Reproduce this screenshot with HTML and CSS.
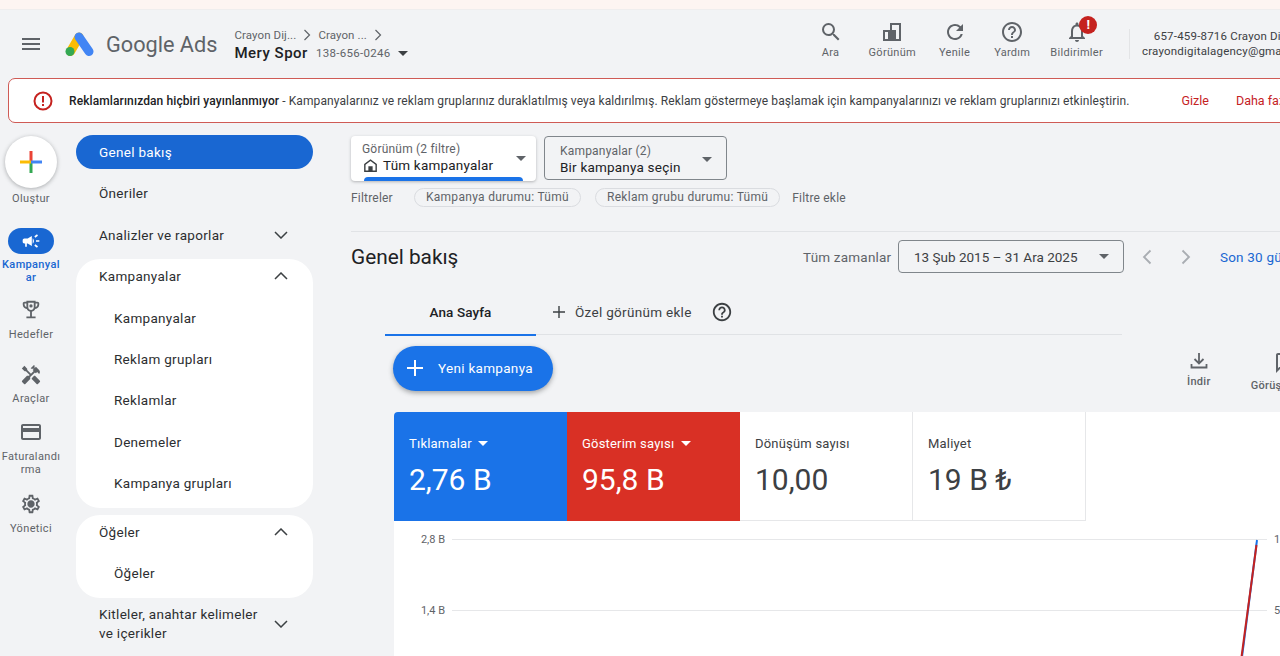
FILE: index.html
```html
<!DOCTYPE html>
<html lang="tr">

<head>
    <meta charset="UTF-8">
    <title>Google Ads - Genel bakış</title>
    <link rel="stylesheet" href="styles.css">
</head>

<body>
    <div class="top-strip"></div>

    <header class="header">
        <svg class="menu-icon" width="18" height="12" viewBox="0 0 18 12"><path fill="#5f6368" d="M0 0h18v2H0zM0 5h18v2H0zM0 10h18v2H0z"/></svg>
        <svg class="logo" width="30" height="26" viewBox="0 0 30 26">
            <path d="M14 6 5.500 20.500" stroke="#fbbc04" stroke-width="9" stroke-linecap="round" fill="none"/>
            <path d="M14 6 24 20.500" stroke="#4285f4" stroke-width="9" stroke-linecap="round" fill="none"/>
            <circle cx="5" cy="20.500" r="4.500" fill="#34a853"/>
        </svg>
        <span class="brand">Google Ads</span>
        <div class="crumbs">
            <div class="crumb-top">
                <span>Crayon Dij...</span>
                <svg width="8" height="12" viewBox="0 0 8 12"><path d="M1.500 1 6.500 6l-5 5" fill="none" stroke="#5f6368" stroke-width="1.200"/></svg>
                <span>Crayon ...</span>
                <svg width="8" height="12" viewBox="0 0 8 12"><path d="M1.500 1 6.500 6l-5 5" fill="none" stroke="#5f6368" stroke-width="1.200"/></svg>
            </div>
            <div class="crumb-main">
                <span class="account-name">Mery Spor</span>
                <span class="account-id">138-656-0246</span>
                <i class="caret caret-dark"></i>
            </div>
        </div>

        <nav class="actions">
            <a class="action action-search">
                <svg width="24" height="24" viewBox="0 0 24 24"><path fill="#5f6368" d="M15.500 14h-.79l-.28-.27A6.470 6.470 0 0 0 16 9.500 6.500 6.500 0 1 0 9.500 16c1.610 0 3.090-.59 4.230-1.570l.27.28v.79l5 4.990L20.490 19l-4.990-5zm-6 0C7.010 14 5 11.990 5 9.500S7.010 5 9.500 5 14 7.010 14 9.500 11.990 14 9.500 14z"/></svg>
                Ara
            </a>
            <a class="action action-view">
                <svg width="24" height="24" viewBox="0 0 24 24"><path fill="#5f6368" d="M3 10h7v11H3zM5 12v7h3v-7zM10 3h11v18H10v-2h9V5h-7v5h-2z"/><path fill="#5f6368" d="M10 10h6v9h-6z"/></svg>
                Görünüm
            </a>
            <a class="action action-reload">
                <svg width="24" height="24" viewBox="0 0 24 24"><path fill="#5f6368" d="M17.650 6.350A7.958 7.958 0 0 0 12 4c-4.420 0-7.990 3.580-7.990 8s3.570 8 7.990 8c3.730 0 6.840-2.550 7.730-6h-2.080A5.990 5.990 0 0 1 12 18c-3.310 0-6-2.690-6-6s2.690-6 6-6c1.660 0 3.140.69 4.220 1.780L13 11h7V4l-2.350 2.350z"/></svg>
                Yenile
            </a>
            <a class="action action-help">
                <svg width="24" height="24" viewBox="0 0 24 24"><path fill="#5f6368" d="M11 18h2v-2h-2v2zm1-16C6.480 2 2 6.480 2 12s4.480 10 10 10 10-4.480 10-10S17.520 2 12 2zm0 18c-4.410 0-8-3.590-8-8s3.590-8 8-8 8 3.590 8 8-3.590 8-8 8zm0-14c-2.210 0-4 1.790-4 4h2c0-1.100.9-2 2-2s2 .9 2 2c0 2-3 1.750-3 5h2c0-2.250 3-2.500 3-5 0-2.210-1.790-4-4-4z"/></svg>
                Yardım
            </a>
            <a class="action action-bell">
                <svg width="24" height="24" viewBox="0 0 24 24"><path fill="#5f6368" d="M12 22c1.100 0 2-.9 2-2h-4c0 1.100.9 2 2 2zm6-6v-5c0-3.070-1.630-5.640-4.500-6.320V4c0-.83-.67-1.500-1.500-1.500s-1.500.67-1.500 1.500v.68C7.640 5.360 6 7.920 6 11v5l-2 2v1h16v-1l-2-2zm-2 1H8v-6c0-2.480 1.510-4.500 4-4.500s4 2.020 4 4.500v6z"/></svg>
                Bildirimler
                <span class="badge">!</span>
            </a>
        </nav>

        <div class="account">
            <div>657-459-8716 Crayon Dijital</div>
            <div>crayondigitalagency@gmail.com</div>
        </div>
    </header>

    <div class="alert">
        <svg class="alert-icon" width="20" height="20" viewBox="0 0 20 20">
            <circle cx="10" cy="10" r="8.500" fill="none" stroke="#c5221f" stroke-width="2"/>
            <path d="M9 5h2v6.500H9zM9 13h2v2H9z" fill="#c5221f"/>
        </svg>
        <p class="alert-text"><b>Reklamlarınızdan hiçbiri yayınlanmıyor</b> - Kampanyalarınız ve reklam gruplarınız duraklatılmış veya kaldırılmış. Reklam göstermeye başlamak için kampanyalarınızı ve reklam gruplarınızı etkinleştirin.</p>
        <a class="alert-link alert-hide">Gizle</a>
        <a class="alert-link">Daha fazla bilgi</a>
    </div>

    <div class="layout">
        <aside class="rail">
            <div class="create">
                <svg width="24" height="24" viewBox="0 0 24 24">
                    <path d="M10.500 1h3v11h-3z" fill="#ea4335"/>
                    <path d="M10.500 12h3v11h-3z" fill="#34a853"/>
                    <path d="M1 10.500h11v3H1z" fill="#fbbc04"/>
                    <path d="M12 10.500h11v3H12z" fill="#4285f4"/>
                </svg>
            </div>
            <span class="rail-label create-label">Oluştur</span>

            <div class="rail-pill">
                <svg width="20" height="20" viewBox="0 0 24 24"><path fill="#fff" d="M18 11v2h4v-2h-4zm-2 6.610c.96.71 2.210 1.650 3.200 2.390.4-.53.8-1.070 1.200-1.600-.99-.74-2.240-1.680-3.200-2.400-.4.54-.8 1.080-1.200 1.610zM20.400 5.600c-.4-.53-.8-1.070-1.200-1.600-.99.74-2.240 1.680-3.200 2.400.4.53.8 1.070 1.200 1.600.96-.72 2.210-1.650 3.200-2.400zM4 9c-1.100 0-2 .9-2 2v2c0 1.100.9 2 2 2h1v4h2v-4h1l5 3V6L8 9H4zm11.500 3c0-1.330-.58-2.530-1.500-3.350v6.690c.92-.81 1.500-2.010 1.500-3.340z"/></svg>
            </div>
            <span class="rail-label rail-active">Kampanyal<br>ar</span>

            <svg class="rail-icon icon-goals" width="22" height="22" viewBox="0 0 24 24"><path fill="#5f6368" fill-rule="evenodd" d="M19 3h-2V2H7v1H5C3.900 3 3 3.900 3 5v1c0 2.550 1.920 4.630 4.390 4.940.63 1.500 1.980 2.630 3.610 2.960V19H7v2h10v-2h-4v-5.100c1.630-.33 2.980-1.460 3.610-2.960C19.080 10.630 21 8.550 21 6V5c0-1.100-.9-2-2-2zM5 6V5h2v3.820C5.840 8.400 5 7.300 5 6zm14 0c0 1.300-.84 2.400-2 2.820V5h2v1zM12 12c-1.650 0-3-1.350-3-3V4h6v5c0 1.650-1.350 3-3 3z"/><circle cx="12" cy="7.500" r="1.800" fill="#5f6368"/></svg>
            <span class="rail-label">Hedefler</span>

            <svg class="rail-icon icon-tools" width="22" height="22" viewBox="0 0 24 24"><path fill="#5f6368" d="M21.670 18.170l-5.300-5.300h-.99l-2.540 2.540v.99l5.300 5.300c.39.39 1.020.39 1.410 0l2.120-2.120c.39-.38.39-1.020 0-1.410z"/><path fill="#5f6368" d="M17.340 10.190l1.410-1.410 2.120 2.120c1.170-1.170 1.170-3.070 0-4.240l-3.540-3.540-1.410 1.410V1.710l-.7-.71-3.540 3.540.71.71h2.830l-1.410 1.410 1.060 1.060-2.890 2.890-4.130-4.130V5.060L4.830 2.040 2 4.870 5.030 7.900h1.410l4.130 4.130-.85.85H7.600l-5.300 5.300c-.39.39-.39 1.020 0 1.410l2.120 2.120c.39.39 1.020.39 1.410 0l5.300-5.300v-2.120l5.150-5.150 1.060 1.050z"/></svg>
            <span class="rail-label">Araçlar</span>

            <svg class="rail-icon icon-billing" width="24" height="24" viewBox="0 0 24 24"><path fill="#5f6368" d="M20 4H4c-1.110 0-1.990.89-1.990 2L2 18c0 1.110.89 2 2 2h16c1.110 0 2-.89 2-2V6c0-1.110-.89-2-2-2zm0 14H4v-6h16v6zm0-10H4V6h16v2z"/></svg>
            <span class="rail-label">Faturalandı<br>rma</span>

            <svg class="rail-icon icon-admin" width="22" height="22" viewBox="0 0 24 24"><path fill="#5f6368" d="M19.430 12.980c.04-.32.07-.64.07-.98 0-.34-.03-.66-.07-.98l2.110-1.650c.19-.15.24-.42.12-.64l-2-3.460c-.09-.16-.26-.25-.44-.25-.06 0-.12.01-.17.03l-2.490 1c-.52-.4-1.080-.73-1.690-.98l-.38-2.650C14.460 2.180 14.250 2 14 2h-4c-.25 0-.46.18-.49.42l-.38 2.650c-.61.25-1.170.59-1.690.98l-2.490-1c-.06-.02-.12-.03-.18-.03-.17 0-.34.09-.43.25l-2 3.460c-.13.22-.07.49.12.64l2.110 1.650c-.04.32-.07.65-.07.98 0 .33.03.66.07.98l-2.110 1.650c-.19.15-.24.42-.12.64l2 3.460c.09.16.26.25.44.25.06 0 .12-.01.17-.03l2.490-1c.52.4 1.080.73 1.690.98l.38 2.650c.03.24.24.42.49.42h4c.25 0 .46-.18.49-.42l.38-2.650c.61-.25 1.170-.59 1.690-.98l2.490 1c.06.02.12.03.18.03.17 0 .34-.09.43-.25l2-3.460c.12-.22.07-.49-.12-.64l-2.110-1.650zm-1.980-1.710c.04.31.05.52.05.73 0 .21-.02.43-.05.73l-.14 1.130.89.7 1.080.84-.7 1.210-1.270-.51-1.040-.42-.9.68c-.43.32-.84.56-1.250.73l-1.060.43-.16 1.130-.2 1.350h-1.400l-.19-1.350-.16-1.130-1.060-.43c-.43-.18-.83-.41-1.230-.71l-.91-.7-1.060.43-1.270.51-.7-1.210 1.080-.84.89-.7-.14-1.130c-.03-.31-.05-.54-.05-.74s.02-.43.05-.73l.14-1.130-.89-.7-1.080-.84.7-1.210 1.270.51 1.040.42.9-.68c.43-.32.84-.56 1.250-.73l1.060-.43.16-1.130.2-1.350h1.390l.19 1.350.16 1.130 1.060.43c.43.18.83.41 1.230.71l.91.7 1.060-.43 1.270-.51.7 1.210-1.070.85-.89.7.14 1.130zM12 8c-2.210 0-4 1.790-4 4s1.790 4 4 4 4-1.790 4-4-1.790-4-4-4z"/></svg>
            <span class="rail-label">Yönetici</span>
        </aside>

        <nav class="side-nav">
            <a class="nav-item nav-active">Genel bakış</a>
            <a class="nav-item">Öneriler</a>
            <a class="nav-item">Analizler ve raporlar
                <svg class="chev" width="14" height="8" viewBox="0 0 14 8"><path d="M1 1l6 6 6-6" fill="none" stroke="#3c4043" stroke-width="1.500"/></svg>
            </a>
            <div class="nav-group">
                <a class="nav-item">Kampanyalar
                    <svg class="chev" width="14" height="8" viewBox="0 0 14 8"><path d="M1 7l6-6 6 6" fill="none" stroke="#3c4043" stroke-width="1.500"/></svg>
                </a>
                <a class="nav-item nav-sub">Kampanyalar</a>
                <a class="nav-item nav-sub">Reklam grupları</a>
                <a class="nav-item nav-sub">Reklamlar</a>
                <a class="nav-item nav-sub">Denemeler</a>
                <a class="nav-item nav-sub">Kampanya grupları</a>
            </div>
            <div class="nav-group">
                <a class="nav-item">Öğeler
                    <svg class="chev" width="14" height="8" viewBox="0 0 14 8"><path d="M1 7l6-6 6 6" fill="none" stroke="#3c4043" stroke-width="1.500"/></svg>
                </a>
                <a class="nav-item nav-sub">Öğeler</a>
            </div>
            <a class="nav-item nav-tall">Kitleler, anahtar kelimeler<br>ve içerikler
                <svg class="chev" width="14" height="8" viewBox="0 0 14 8"><path d="M1 1l6 6 6-6" fill="none" stroke="#3c4043" stroke-width="1.500"/></svg>
            </a>
        </nav>

        <main class="main">
            <div class="pickers">
                <div class="picker picker-view">
                    <span class="picker-label">Görünüm (2 filtre)</span>
                    <span class="picker-value">
                        <svg width="17" height="17" viewBox="0 0 24 24"><path fill="#3c4043" d="M12 3 3 10v11h18V10zm0 2.500 7 5.400V19h-4v-6H9v6H5v-8.100z"/></svg>
                        Tüm kampanyalar
                    </span>
                    <i class="caret caret-grey"></i>
                    <span class="picker-bar"></span>
                </div>
                <div class="picker picker-campaign">
                    <span class="picker-label">Kampanyalar (2)</span>
                    <span class="picker-value">Bir kampanya seçin</span>
                    <i class="caret caret-grey"></i>
                </div>
            </div>

            <div class="filters">
                <span class="filters-label">Filtreler</span>
                <span class="chip">Kampanya durumu: Tümü</span>
                <span class="chip">Reklam grubu durumu: Tümü</span>
                <span class="filters-add">Filtre ekle</span>
            </div>

            <div class="rule"></div>

            <div class="title-row">
                <h1 class="title">Genel bakış</h1>
                <span class="range-label">Tüm zamanlar</span>
                <div class="range">13 Şub 2015 – 31 Ara 2025 <i class="caret caret-grey"></i></div>
                <svg class="range-prev" width="10" height="16" viewBox="0 0 10 16"><path d="M8.500 1.500 2 8l6.500 6.500" fill="none" stroke="#a9adb2" stroke-width="1.800"/></svg>
                <svg class="range-next" width="10" height="16" viewBox="0 0 10 16"><path d="M1.500 1.500 8 8l-6.500 6.500" fill="none" stroke="#a9adb2" stroke-width="1.800"/></svg>
                <a class="range-last">Son 30 gün</a>
            </div>

            <div class="tabs">
                <a class="tab tab-active">Ana Sayfa</a>
                <a class="tab tab-add">
                    <svg width="14" height="14" viewBox="0 0 14 14"><path d="M6.300 1h1.400v12H6.300zM1 6.300h12v1.400H1z" fill="#3c4043"/></svg>
                    Özel görünüm ekle
                </a>
                <svg class="tab-help" width="22" height="22" viewBox="0 0 24 24"><path fill="#3c4043" d="M11 18h2v-2h-2v2zm1-16C6.480 2 2 6.480 2 12s4.480 10 10 10 10-4.480 10-10S17.520 2 12 2zm0 18c-4.410 0-8-3.590-8-8s3.590-8 8-8 8 3.590 8 8-3.590 8-8 8zm0-14c-2.210 0-4 1.790-4 4h2c0-1.100.9-2 2-2s2 .9 2 2c0 2-3 1.750-3 5h2c0-2.250 3-2.500 3-5 0-2.210-1.790-4-4-4z"/></svg>
            </div>

            <div class="toolbar">
                <a class="new-btn">
                    <svg width="16" height="16" viewBox="0 0 16 16"><path d="M7 0h2v16H7zM0 7h16v2H0z" fill="#fff"/></svg>
                    Yeni kampanya
                </a>
                <a class="tool tool-download">
                    <svg width="20" height="20" viewBox="0 0 20 20"><path d="M10 2v10M5.500 8 10 12.500 14.500 8M2.500 13v3.500h15V13" fill="none" stroke="#5f6368" stroke-width="1.800"/></svg>
                    İndir
                </a>
                <a class="tool tool-feedback">
                    <svg width="24" height="24" viewBox="0 0 24 24"><path fill="#5f6368" d="M20 2H4c-1.100 0-2 .9-2 2v18l4-4h14c1.100 0 2-.9 2-2V4c0-1.100-.9-2-2-2zm0 14H5.200L4 17.200V4h16v12z"/></svg>
                    Görüş bildirin
                </a>
            </div>

            <section class="panel">
                <div class="tiles">
                    <div class="tile tile-blue">
                        <span class="tile-label">Tıklamalar <i class="caret caret-white"></i></span>
                        <span class="tile-value">2,76 B</span>
                    </div>
                    <div class="tile tile-red">
                        <span class="tile-label">Gösterim sayısı <i class="caret caret-white"></i></span>
                        <span class="tile-value">95,8 B</span>
                    </div>
                    <div class="tile">
                        <span class="tile-label">Dönüşüm sayısı</span>
                        <span class="tile-value">10,00</span>
                    </div>
                    <div class="tile">
                        <span class="tile-label">Maliyet</span>
                        <span class="tile-value">19 B ₺</span>
                    </div>
                </div>
                <svg class="chart" width="958" height="136" viewBox="0 0 958 136">
                    <path d="M58 18.500H873M58 89.500H873" stroke="#e6e7e9" stroke-width="1" fill="none"/>
                    <text x="51" y="22" text-anchor="end" class="chart-text">2,8 B</text>
                    <text x="51" y="93" text-anchor="end" class="chart-text">1,4 B</text>
                    <text x="880" y="22" class="chart-text">10</text>
                    <text x="880" y="93" class="chart-text">5</text>
                    <path d="M863 19 848 136" stroke="#1a73e8" stroke-width="2" fill="none"/>
                    <path d="M862.500 24 847.500 136" stroke="#c5221f" stroke-width="2" fill="none"/>
                </svg>
            </section>
        </main>
    </div>
</body>

</html>
```

FILE: styles.css
```css
* {
    box-sizing: border-box;
}

html,
body {
    height: 656px;
    overflow: hidden;
}

body {
    margin: 0;
    width: 1280px;
    background: #f2f3f5;
    color: #202124;
    font-family: Roboto, "Liberation Sans", sans-serif;
    font-size: 13px;
}

a {
    color: inherit;
    text-decoration: none;
}

.caret {
    display: inline-block;
    width: 0;
    height: 0;
    border-left: 5px solid transparent;
    border-right: 5px solid transparent;
    border-top: 5px solid #5f6368;
}

.caret-dark {
    border-top-color: #3c4043;
}

.caret-white {
    border-top-color: #fff;
}

.top-strip {
    height: 10px;
    background: #fdf5f2;
    border-bottom: 1px solid #efeeee;
}

/* header */
.header {
    display: flex;
    align-items: center;
    width: 1312px;
    height: 68px;
    padding-left: 22px;
}

.menu-icon {
    flex: none;
}

.logo {
    flex: none;
    margin-left: 25px;
}

.brand {
    margin-left: 11px;
    font-size: 21.700px;
    color: #5f6368;
    white-space: nowrap;
}

.crumbs {
    margin-left: 17px;
    margin-top: 2px;
}

.crumb-top {
    display: flex;
    align-items: center;
    gap: 7px;
    font-size: 11.500px;
    letter-spacing: .1px;
    color: #5f6368;
}

.crumb-main {
    display: flex;
    align-items: center;
    margin-top: 2px;
}

.account-name {
    font-size: 15px;
    font-weight: 500;
    letter-spacing: .5px;
}

.account-id {
    margin-left: 8px;
    font-size: 11.500px;
    letter-spacing: .3px;
    color: #5f6368;
}

.crumb-main .caret {
    margin-left: 7px;
}

.actions {
    display: flex;
    margin-left: auto;
    margin-bottom: 9px;
}

.action {
    position: relative;
    display: flex;
    flex-direction: column;
    align-items: center;
    gap: 2px;
    font-size: 11px;
    letter-spacing: .3px;
    color: #5f6368;
    white-space: nowrap;
}

.action-search {
    margin-right: 26px;
}

.action-view {
    margin-right: 23px;
}

.action-reload {
    margin-right: 24px;
}

.action-help {
    margin-right: 20px;
}

.badge {
    position: absolute;
    top: -4px;
    left: 29px;
    width: 18px;
    height: 18px;
    border-radius: 50%;
    background: #c5221f;
    color: #fff;
    font-size: 13px;
    font-weight: 700;
    line-height: 18px;
    text-align: center;
}

.account {
    position: relative;
    flex: none;
    width: 170px;
    margin-left: 39px;
    font-size: 11.500px;
    line-height: 15px;
    letter-spacing: .2px;
    text-align: center;
    color: #3c4043;
    white-space: nowrap;
}

.account:before {
    content: "";
    position: absolute;
    left: -13px;
    top: 0;
    height: 30px;
    border-left: 1px solid #e3e4e6;
}

/* alert */
.alert {
    display: flex;
    align-items: center;
    width: 1340px;
    height: 45px;
    margin-left: 8px;
    padding-left: 24px;
    background: #fff;
    border: 1px solid #cf5a55;
    border-radius: 7px;
}

.alert-icon {
    flex: none;
}

.alert-text {
    margin: 0 0 0 16px;
    font-size: 12px;
    letter-spacing: .1px;
    color: #3c4043;
    white-space: nowrap;
}

.alert-text b {
    font-weight: 500;
    color: #202124;
}

.alert-link {
    font-size: 12.500px;
    color: #c5221f;
    white-space: nowrap;
    margin-left: 27px;
}

.alert-hide {
    margin-left: 52px;
}

/* page columns */
.layout {
    display: flex;
    margin-top: 12px;
}

.rail {
    flex: none;
    display: flex;
    flex-direction: column;
    align-items: center;
    width: 62px;
    margin-right: 1px;
}

.create {
    display: flex;
    align-items: center;
    justify-content: center;
    width: 52px;
    height: 52px;
    margin-top: 1px;
    background: #fff;
    border-radius: 50%;
    box-shadow: 0 1px 4px rgba(60, 64, 67, .4);
}

.rail-label {
    margin-top: 3px;
    font-size: 11px;
    line-height: 13px;
    letter-spacing: .35px;
    color: #5f6368;
    text-align: center;
    white-space: nowrap;
}

.create-label {
    margin-top: 4px;
}

.rail-pill {
    display: flex;
    align-items: center;
    justify-content: center;
    width: 46px;
    height: 26px;
    margin-top: 23px;
    background: #1967d2;
    border-radius: 13px;
}

.rail-active {
    margin-top: 4px;
    font-weight: 500;
    color: #1967d2;
}

.rail-icon {
    flex: none;
}

.icon-goals {
    margin-top: 15px;
}

.icon-tools {
    margin-top: 23px;
}

.icon-billing {
    margin-top: 15px;
}

.icon-admin {
    margin-top: 17px;
}

.icon-goals + .rail-label,
.icon-tools + .rail-label,
.icon-admin + .rail-label {
    margin-top: 7px;
}

.icon-tools + .rail-label {
    margin-top: 6px;
}

.icon-billing + .rail-label {
    margin-top: 6px;
}

/* side nav */
.side-nav {
    flex: none;
    display: flex;
    flex-direction: column;
    gap: 7.400px;
    width: 237px;
    margin-left: 13px;
}

.nav-item {
    display: flex;
    align-items: center;
    justify-content: space-between;
    flex: none;
    height: 34px;
    padding: 0 25px 0 23px;
    font-size: 13.500px;
    letter-spacing: .3px;
    color: #2c2e30;
    white-space: nowrap;
}

.nav-active {
    background: #1967d2;
    color: #fff;
    border-radius: 17px;
}

.nav-group {
    display: flex;
    flex-direction: column;
    gap: 7.400px;
    padding-bottom: 7.400px;
    background: #fff;
    border-radius: 24px;
}

.nav-sub {
    padding-left: 38px;
}

.nav-tall {
    height: 38px;
    line-height: 19px;
}

/* main */
.main {
    flex: none;
    width: 1000px;
    margin-left: 38px;
    padding-top: 1px;
}

.pickers {
    display: flex;
    gap: 8px;
    height: 45px;
}

.picker {
    position: relative;
    display: flex;
    flex-direction: column;
    height: 45px;
    padding: 6px 0 0 11px;
    border-radius: 4px;
}

.picker-view {
    width: 185px;
    background: #fff;
    box-shadow: 0 1px 3px rgba(60, 64, 67, .35);
    overflow: hidden;
}

.picker-campaign {
    width: 183px;
    height: 44px;
    padding: 7px 0 0 15px;
    border: 1px solid #80868b;
}

.picker-label {
    font-size: 12px;
    line-height: 14px;
    letter-spacing: .2px;
    color: #5f6368;
}

.picker-value {
    display: flex;
    align-items: center;
    gap: 4px;
    font-size: 13.500px;
    line-height: 18px;
    letter-spacing: .2px;
    color: #202124;
    white-space: nowrap;
}

.picker .caret {
    position: absolute;
    top: 20px;
    right: 10px;
}

.picker-campaign .caret {
    right: 14px;
}

.picker-bar {
    position: absolute;
    left: 13px;
    bottom: 0;
    width: 159px;
    height: 4px;
    background: #1a73e8;
    border-radius: 4px 4px 0 0;
}

.filters {
    display: flex;
    align-items: center;
    height: 19px;
    margin-top: 7px;
    font-size: 12px;
    letter-spacing: .2px;
    color: #5f6368;
}

.chip {
    height: 19px;
    padding: 0 11px;
    border: 1px solid #dadce0;
    border-radius: 10px;
    line-height: 17px;
    letter-spacing: .3px;
    white-space: nowrap;
}

.filters-label {
    margin-right: 21px;
}

.chip + .chip {
    margin-left: 14px;
}

.filters-add {
    margin-left: 12px;
}

.rule {
    height: 1px;
    margin-top: 24px;
    background: #e1e3e6;
}

.title-row {
    display: flex;
    align-items: center;
    height: 33px;
    margin-top: 8px;
}

.title {
    margin: 0;
    width: 452px;
    font-size: 20.800px;
    font-weight: 400;
    white-space: nowrap;
}

.range-label {
    width: 95px;
    font-size: 13.500px;
    letter-spacing: .2px;
    color: #5f6368;
    white-space: nowrap;
}

.range {
    display: flex;
    align-items: center;
    width: 226px;
    height: 33px;
    padding-left: 15px;
    border: 1px solid #80868b;
    border-radius: 4px;
    font-size: 13.500px;
    color: #3c4043;
    white-space: nowrap;
}

.range .caret {
    margin-left: auto;
    margin-right: 14px;
}

.range-prev {
    margin-left: 18px;
}

.range-next {
    margin-left: 29px;
}

.range-last {
    margin-left: 29px;
    font-size: 13.500px;
    letter-spacing: .2px;
    color: #1967d2;
    white-space: nowrap;
}

.tabs {
    display: flex;
    align-items: center;
    width: 737px;
    height: 46px;
    margin-top: 16px;
    margin-left: 34px;
    border-bottom: 1px solid #e0e2e5;
}

.tab {
    display: flex;
    align-items: center;
    justify-content: center;
    height: 44px;
    font-size: 13.500px;
    letter-spacing: .3px;
    color: #202124;
    white-space: nowrap;
}

.tab-active {
    position: relative;
    width: 151px;
    font-weight: 500;
    letter-spacing: .1px;
}

.tab-active:after {
    content: "";
    position: absolute;
    left: 0;
    right: 0;
    bottom: -2px;
    height: 2px;
    background: #1a73e8;
}

.tab-add {
    gap: 9px;
    margin-left: 16px;
    color: #3c4043;
}

.tab-help {
    margin-left: 19px;
}

.toolbar {
    display: flex;
    margin-top: 11px;
    margin-left: 42px;
}

.new-btn {
    display: flex;
    align-items: center;
    gap: 15px;
    width: 160px;
    height: 45px;
    padding: 0 0 1px 14px;
    background: #1a73e8;
    border-radius: 23px;
    box-shadow: 0 2px 5px rgba(60, 64, 67, .45);
    color: #fff;
    font-size: 13.500px;
    letter-spacing: .3px;
    white-space: nowrap;
}

.tool {
    display: flex;
    flex-direction: column;
    align-items: center;
    gap: 4px;
    margin-top: 5px;
    font-size: 11px;
    font-weight: 500;
    letter-spacing: .3px;
    color: #5f6368;
    white-space: nowrap;
}

.tool-download {
    margin-left: 634px;
}

.tool-feedback {
    margin-left: 40px;
}

.panel {
    width: 958px;
    margin-top: 20px;
    margin-left: 43px;
    background: #fff;
    border-radius: 4px 4px 0 0;
}

.tiles {
    display: flex;
    height: 109px;
}

.tile {
    display: flex;
    flex-direction: column;
    width: 173px;
    height: 109px;
    padding: 24px 0 0 15px;
    border-right: 1px solid #e6e7e9;
    border-bottom: 1px solid #e6e7e9;
    color: #3c4043;
}

.tile-blue {
    background: #1a73e8;
    color: #fff;
    border: 0;
    border-radius: 4px 0 0 0;
}

.tile-red {
    background: #d93025;
    color: #fff;
    border: 0;
}

.tile-label {
    font-size: 13px;
    line-height: 16px;
    letter-spacing: .2px;
    white-space: nowrap;
}

.tile-label .caret {
    margin-left: 3px;
    vertical-align: 2px;
}

.tile-value {
    margin-top: 10px;
    font-size: 30px;
    line-height: 36px;
    white-space: nowrap;
}

.chart {
    display: block;
}

.chart-text {
    font-family: Roboto, "Liberation Sans", sans-serif;
    font-size: 11px;
    fill: #5f6368;
}
```
